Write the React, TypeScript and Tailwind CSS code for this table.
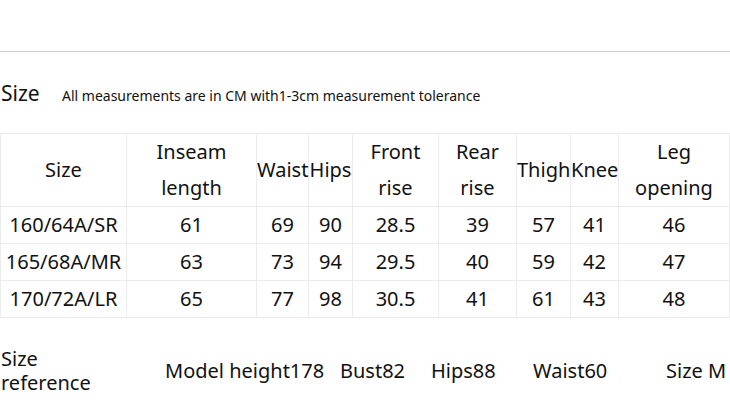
import React from "react";

const cols = [126, 130, 52, 44, 86, 78, 54, 48, 111];

const header: string[][] = [
  ["Size"],
  ["Inseam", "length"],
  ["Waist"],
  ["Hips"],
  ["Front", "rise"],
  ["Rear", "rise"],
  ["Thigh"],
  ["Knee"],
  ["Leg", "opening"],
];

const rows: string[][] = [
  ["160/64A/SR", "61", "69", "90", "28.5", "39", "57", "41", "46"],
  ["165/68A/MR", "63", "73", "94", "29.5", "40", "59", "42", "47"],
  ["170/72A/LR", "65", "77", "98", "30.5", "41", "61", "43", "48"],
];

export default function App() {
  return (
    <div
      className="w-[730px] h-[409px] bg-white text-[#111] overflow-hidden"
      style={{ fontFamily: '"Noto Sans", "Open Sans", sans-serif' }}
    >
      <div className="h-[51px]" />
      <div className="h-px bg-[#cfcfcf]" />
      <div className="flex items-baseline h-[81px] pt-[27px]">
        <span className="text-[21px] pl-[1px] w-[62px] leading-[28px]">Size</span>
        <span className="text-[14px] leading-[28px]">
          All measurements are in CM with1-3cm measurement tolerance
        </span>
      </div>
      <table className="border-collapse table-fixed text-[20px] w-[730px]">
        <colgroup>
          {cols.map((w, i) => (
            <col key={i} style={{ width: w }} />
          ))}
        </colgroup>
        <thead>
          <tr className="h-[73px]">
            {header.map((h, i) => (
              <th
                key={i}
                className="border border-[#ececec] font-normal text-center p-0 leading-[36px] whitespace-nowrap"
              >
                {h.map((l, j) => (
                  <div key={j}>{l}</div>
                ))}
              </th>
            ))}
          </tr>
        </thead>
        <tbody>
          {rows.map((r, i) => (
            <tr key={i} className="h-[37px]">
              {r.map((c, j) => (
                <td
                  key={j}
                  className="border border-[#ececec] text-center p-0 leading-[36px] whitespace-nowrap"
                >
                  {c}
                </td>
              ))}
            </tr>
          ))}
        </tbody>
      </table>
      <div className="flex items-center h-[70px] mt-[18px] text-[20px] whitespace-nowrap">
        <div className="w-[165px] pl-[1px] leading-[24px]">
          <div>Size</div>
          <div>reference</div>
        </div>
        <div className="w-[175px]">Model height178</div>
        <div className="w-[91px]">Bust82</div>
        <div className="w-[102px]">Hips88</div>
        <div className="w-[133px]">Waist60</div>
        <div>Size M</div>
      </div>
    </div>
  );
}
